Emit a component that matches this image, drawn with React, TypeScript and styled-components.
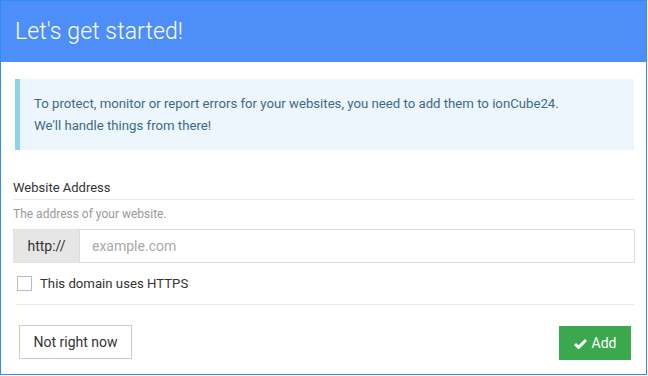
import React, { useState } from "react";
import styled, { createGlobalStyle } from "styled-components";

const GlobalStyle = createGlobalStyle`
  html, body {
    margin: 0;
    padding: 0;
    background: #ffffff;
  }
  * {
    box-sizing: border-box;
  }
  body {
    font-family: Roboto, "Liberation Sans", Arial, sans-serif;
  }
`;

const Modal = styled.div`
  width: 647px;
  height: 375px;
  border: 1px solid #2f8cf4;
  display: flex;
  flex-direction: column;
  background: #ffffff;
`;

const Header = styled.div`
  height: 61px;
  flex-shrink: 0;
  display: flex;
  align-items: center;
  padding: 0 14px;
  background-color: #4d8ef8;
`;

const Title = styled.h1`
  margin: 0;
  font-size: 23px;
  font-weight: 300;
  color: #ffffff;
  letter-spacing: 0.1px;
`;

const Body = styled.div`
  flex: 1;
  display: flex;
  flex-direction: column;
  padding: 17px 11px 0 12px;
`;

const Notice = styled.div`
  margin: 0 1px 0 2px;
  padding: 14px 14px 13px 14px;
  background-color: #edf6fc;
  border-left: 5px solid #8dd4e4;
  color: #3c6a8c;
  font-size: 13.2px;
  line-height: 22px;
`;

const Field = styled.div`
  display: flex;
  flex-direction: column;
  margin-top: 29px;
`;

const Label = styled.div`
  font-size: 13px;
  color: #333333;
  padding-bottom: 2px;
  border-bottom: 1px solid #e8e8e8;
  line-height: 18px;
`;

const Help = styled.div`
  font-size: 12px;
  color: #999999;
  line-height: 16px;
  margin-top: 6px;
`;

const InputGroup = styled.div`
  display: flex;
  height: 34px;
  margin-top: 7px;
`;

const Addon = styled.div`
  width: 66px;
  display: flex;
  align-items: center;
  justify-content: center;
  background-color: #e6e6e6;
  border: 1px solid #e2e2e2;
  border-right: none;
  color: #333333;
  font-size: 14px;
`;

const TextInput = styled.input`
  flex: 1;
  min-width: 0;
  border: 1px solid #dddddd;
  padding: 0 12px;
  font-family: inherit;
  font-size: 14px;
  color: #333333;
  outline: none;

  &::placeholder {
    color: #aaaaaa;
  }
`;

const CheckRow = styled.label`
  display: flex;
  align-items: center;
  gap: 8px;
  margin-top: 13px;
  padding-left: 4px;
  font-size: 13.2px;
  color: #333333;
  cursor: pointer;
`;

const Box = styled.span<{ $checked: boolean }>`
  width: 15px;
  height: 15px;
  border: 1px solid #bbbbbb;
  background: ${(p) => (p.$checked ? "#4d8ef8" : "#ffffff")};
  display: inline-block;
`;

const Divider = styled.div`
  height: 1px;
  margin: 13px 1px 0 3px;
  background-color: #e8e8e8;
`;

const Footer = styled.div`
  display: flex;
  justify-content: space-between;
  align-items: flex-start;
  padding: 20px 4px 0 6px;
`;

const Button = styled.button<{ $primary?: boolean }>`
  height: 34px;
  padding: 0 13.5px;
  display: flex;
  align-items: center;
  gap: 5px;
  font-family: inherit;
  font-size: 14px;
  cursor: pointer;
  border: 1px solid ${(p) => (p.$primary ? "#3aa94d" : "#cccccc")};
  background-color: ${(p) => (p.$primary ? "#3aa94d" : "#ffffff")};
  color: ${(p) => (p.$primary ? "#ffffff" : "#333333")};
  margin-top: ${(p) => (p.$primary ? "1px" : "0")};
`;

const CheckIcon = () => (
  <svg width="13" height="11" viewBox="0 0 13 11" aria-hidden="true">
    <path d="M1 6 L4.6 9.4 L12 2" fill="none" stroke="#ffffff" strokeWidth="3" />
  </svg>
);

export default function App() {
  const [https, setHttps] = useState(false);

  return (
    <>
      <GlobalStyle />
      <Modal>
        <Header>
          <Title>Let's get started!</Title>
        </Header>
        <Body>
          <Notice>
            To protect, monitor or report errors for your websites, you need to add them to ionCube24.
            <br />
            We'll handle things from there!
          </Notice>
          <Field>
            <Label>Website Address</Label>
            <Help>The address of your website.</Help>
            <InputGroup>
              <Addon>http://</Addon>
              <TextInput placeholder="example.com" />
            </InputGroup>
            <CheckRow onClick={() => setHttps(!https)}>
              <Box $checked={https} />
              This domain uses HTTPS
            </CheckRow>
          </Field>
          <Divider />
          <Footer>
            <Button>Not right now</Button>
            <Button $primary>
              <CheckIcon />
              Add
            </Button>
          </Footer>
        </Body>
      </Modal>
    </>
  );
}
